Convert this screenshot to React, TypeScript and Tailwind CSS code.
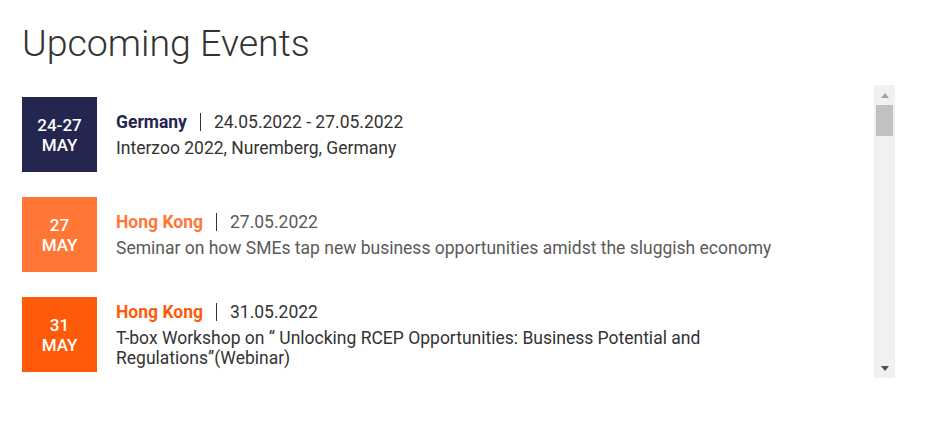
type EventItem = {
  day: string;
  month: string;
  place: string;
  date: string;
  title: string;
  boxBg: string;
  placeColor: string;
  textColor: string;
};

const events: EventItem[] = [
  {
    day: "24-27",
    month: "MAY",
    place: "Germany",
    date: "24.05.2022 - 27.05.2022",
    title: "Interzoo 2022, Nuremberg, Germany",
    boxBg: "bg-[#252650]",
    placeColor: "text-[#252650]",
    textColor: "text-[#333333]",
  },
  {
    day: "27",
    month: "MAY",
    place: "Hong Kong",
    date: "27.05.2022",
    title: "Seminar on how SMEs tap new business opportunities amidst the sluggish economy",
    boxBg: "bg-[#ff7637]",
    placeColor: "text-[#ff7637]",
    textColor: "text-[#5a5a5a]",
  },
  {
    day: "31",
    month: "MAY",
    place: "Hong Kong",
    date: "31.05.2022",
    title:
      "T-box Workshop on \u201c Unlocking RCEP Opportunities: Business Potential and Regulations\u201d(Webinar)",
    boxBg: "bg-[#ff5a0a]",
    placeColor: "text-[#ff5a0a]",
    textColor: "text-[#333333]",
  },
];

const App = () => {
  return (
    <div className="w-[930px] h-[422px] bg-white pl-[22px] pt-[25px] font-['Roboto','Liberation_Sans',sans-serif]">
      <h1 className="text-[37.5px] leading-[37px] font-light text-[#333333]">Upcoming Events</h1>

      {/* list + fake scrollbar */}
      <div className="flex mt-[23px] w-[873px] h-[293px]">
        <div className="flex-1 overflow-hidden pt-[12px] flex flex-col gap-[25px]">
          {events.map((ev, i) => (
            <div key={i} className="flex items-center">
              <div
                className={`${ev.boxBg} w-[75px] h-[75px] shrink-0 flex flex-col items-center justify-center text-white text-[17px] leading-[20px] font-medium`}
              >
                <span>{ev.day}</span>
                <span>{ev.month}</span>
              </div>
              <div className="ml-[19px] pr-[100px]">
                <div className="flex items-center text-[17.5px] leading-[22px]">
                  <span className={`${ev.placeColor} font-bold`}>{ev.place}</span>
                  <span className="w-px h-[18px] bg-[#333333] mx-[13px]"></span>
                  <span className={ev.textColor}>{ev.date}</span>
                </div>
                <p className={`${ev.textColor} mt-[5px] text-[17.5px] leading-[20px]`}>{ev.title}</p>
              </div>
            </div>
          ))}
        </div>

        <div className="w-[21px] h-full bg-[#f1f1f1] flex flex-col items-center">
          <div className="h-[20px] w-full flex items-center justify-center">
            <svg width="8" height="5" viewBox="0 0 8 5">
              <path d="M4 0 L8 5 L0 5 Z" fill="#a3a3a3" />
            </svg>
          </div>
          <div className="w-[17px] h-[31px] bg-[#c1c1c1]"></div>
          <div className="flex-1"></div>
          <div className="h-[20px] w-full flex items-center justify-center">
            <svg width="8" height="5" viewBox="0 0 8 5">
              <path d="M0 0 L8 0 L4 5 Z" fill="#505050" />
            </svg>
          </div>
        </div>
      </div>
    </div>
  );
};

export default App;
